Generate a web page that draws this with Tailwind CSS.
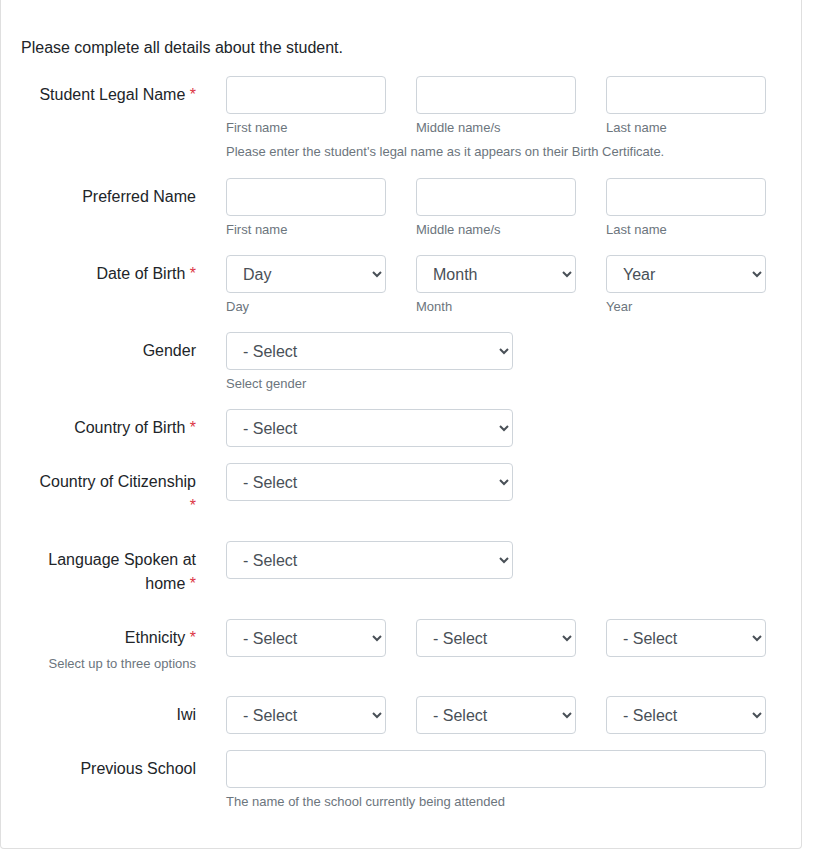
<!DOCTYPE html>
<html lang="en">
<head>
<meta charset="utf-8">
<meta name="viewport" content="width=device-width, initial-scale=1">
<title>Student details</title>
<script src="https://cdn.jsdelivr.net/npm/@tailwindcss/browser@4"></script>
</head>
<body class="bg-white font-['Liberation_Sans',Arial,sans-serif] text-base text-[#212529]">
<form class="mr-[22px] rounded-b border border-t-0 border-[#dfdfdf] bg-white px-5 pt-9 pb-[37px]">
  <p class="mb-4">Please complete all details about the student.</p>

  <div class="flex flex-col gap-4 px-[15px]">
    <div class="grid grid-cols-12 gap-x-[30px]" role="group" aria-labelledby="legal">
      <div id="legal" class="col-span-3 py-[7px] text-right">Student Legal Name <span class="text-[#dc3545]">*</span></div>
      <div class="col-span-3">
        <input id="legal-first" type="text" class="block h-[38px] w-full rounded border border-[#ced4da] bg-white px-3 text-[#495057]">
        <label for="legal-first" class="mt-1 block text-[13px] leading-[19px] text-[#6c757d]">First name</label>
      </div>
      <div class="col-span-3">
        <input id="legal-middle" type="text" class="block h-[38px] w-full rounded border border-[#ced4da] bg-white px-3 text-[#495057]">
        <label for="legal-middle" class="mt-1 block text-[13px] leading-[19px] text-[#6c757d]">Middle name/s</label>
      </div>
      <div class="col-span-3">
        <input id="legal-last" type="text" class="block h-[38px] w-full rounded border border-[#ced4da] bg-white px-3 text-[#495057]">
        <label for="legal-last" class="mt-1 block text-[13px] leading-[19px] text-[#6c757d]">Last name</label>
      </div>
      <small class="col-span-9 col-start-4 mt-[5px] text-[13px] leading-5 text-[#6c757d]">Please enter the student's legal name as it appears on their Birth Certificate.</small>
    </div>

    <div class="grid grid-cols-12 gap-x-[30px]" role="group" aria-labelledby="preferred">
      <div id="preferred" class="col-span-3 py-[7px] text-right">Preferred Name</div>
      <div class="col-span-3">
        <input id="pref-first" type="text" class="block h-[38px] w-full rounded border border-[#ced4da] bg-white px-3 text-[#495057]">
        <label for="pref-first" class="mt-1 block text-[13px] leading-[19px] text-[#6c757d]">First name</label>
      </div>
      <div class="col-span-3">
        <input id="pref-middle" type="text" class="block h-[38px] w-full rounded border border-[#ced4da] bg-white px-3 text-[#495057]">
        <label for="pref-middle" class="mt-1 block text-[13px] leading-[19px] text-[#6c757d]">Middle name/s</label>
      </div>
      <div class="col-span-3">
        <input id="pref-last" type="text" class="block h-[38px] w-full rounded border border-[#ced4da] bg-white px-3 text-[#495057]">
        <label for="pref-last" class="mt-1 block text-[13px] leading-[19px] text-[#6c757d]">Last name</label>
      </div>
    </div>

    <div class="grid grid-cols-12 gap-x-[30px]" role="group" aria-labelledby="dob">
      <div id="dob" class="col-span-3 py-[7px] text-right">Date of Birth <span class="text-[#dc3545]">*</span></div>
      <div class="col-span-3">
        <select id="dob-day" class="block h-[38px] w-full rounded border border-[#ced4da] bg-white px-3 text-[#495057]"><option>Day</option></select>
        <label for="dob-day" class="mt-1 block text-[13px] leading-[19px] text-[#6c757d]">Day</label>
      </div>
      <div class="col-span-3">
        <select id="dob-month" class="block h-[38px] w-full rounded border border-[#ced4da] bg-white px-3 text-[#495057]"><option>Month</option></select>
        <label for="dob-month" class="mt-1 block text-[13px] leading-[19px] text-[#6c757d]">Month</label>
      </div>
      <div class="col-span-3">
        <select id="dob-year" class="block h-[38px] w-full rounded border border-[#ced4da] bg-white px-3 text-[#495057]"><option>Year</option></select>
        <label for="dob-year" class="mt-1 block text-[13px] leading-[19px] text-[#6c757d]">Year</label>
      </div>
    </div>

    <div class="grid grid-cols-12 gap-x-[30px]">
      <label for="gender" class="col-span-3 py-[7px] text-right">Gender</label>
      <div class="col-span-5">
        <select id="gender" aria-describedby="gender-help" class="block h-[38px] w-full rounded border border-[#ced4da] bg-white px-3 text-[#495057]"><option>- Select</option></select>
        <small id="gender-help" class="mt-1 block text-[13px] leading-[19px] text-[#6c757d]">Select gender</small>
      </div>
    </div>

    <div class="grid grid-cols-12 gap-x-[30px]">
      <label for="birth-country" class="col-span-3 py-[7px] text-right">Country of Birth <span class="text-[#dc3545]">*</span></label>
      <div class="col-span-5">
        <select id="birth-country" class="block h-[38px] w-full rounded border border-[#ced4da] bg-white px-3 text-[#495057]"><option>- Select</option></select>
      </div>
    </div>

    <div class="grid grid-cols-12 gap-x-[30px]">
      <label for="citizenship" class="col-span-3 py-[7px] text-right">Country of Citizenship <span class="text-[#dc3545]">*</span></label>
      <div class="col-span-5">
        <select id="citizenship" class="block h-[38px] w-full rounded border border-[#ced4da] bg-white px-3 text-[#495057]"><option>- Select</option></select>
      </div>
    </div>

    <div class="grid grid-cols-12 gap-x-[30px]">
      <label for="language" class="col-span-3 py-[7px] text-right">Language Spoken at home <span class="text-[#dc3545]">*</span></label>
      <div class="col-span-5">
        <select id="language" class="block h-[38px] w-full rounded border border-[#ced4da] bg-white px-3 text-[#495057]"><option>- Select</option></select>
      </div>
    </div>

    <div class="grid grid-cols-12 gap-x-[30px]" role="group" aria-labelledby="ethnicity">
      <div class="col-span-3 py-[7px] text-right">
        <div id="ethnicity">Ethnicity <span class="text-[#dc3545]">*</span></div>
        <small class="mt-1 block text-[13px] leading-[19px] text-[#6c757d]">Select up to three options</small>
      </div>
      <div class="col-span-3">
        <select aria-label="Ethnicity 1" class="block h-[38px] w-full rounded border border-[#ced4da] bg-white px-3 text-[#495057]"><option>- Select</option></select>
      </div>
      <div class="col-span-3">
        <select aria-label="Ethnicity 2" class="block h-[38px] w-full rounded border border-[#ced4da] bg-white px-3 text-[#495057]"><option>- Select</option></select>
      </div>
      <div class="col-span-3">
        <select aria-label="Ethnicity 3" class="block h-[38px] w-full rounded border border-[#ced4da] bg-white px-3 text-[#495057]"><option>- Select</option></select>
      </div>
    </div>

    <div class="grid grid-cols-12 gap-x-[30px]" role="group" aria-labelledby="iwi">
      <div id="iwi" class="col-span-3 py-[7px] text-right">Iwi</div>
      <div class="col-span-3">
        <select aria-label="Iwi 1" class="block h-[38px] w-full rounded border border-[#ced4da] bg-white px-3 text-[#495057]"><option>- Select</option></select>
      </div>
      <div class="col-span-3">
        <select aria-label="Iwi 2" class="block h-[38px] w-full rounded border border-[#ced4da] bg-white px-3 text-[#495057]"><option>- Select</option></select>
      </div>
      <div class="col-span-3">
        <select aria-label="Iwi 3" class="block h-[38px] w-full rounded border border-[#ced4da] bg-white px-3 text-[#495057]"><option>- Select</option></select>
      </div>
    </div>

    <div class="grid grid-cols-12 gap-x-[30px]">
      <label for="school" class="col-span-3 py-[7px] text-right">Previous School</label>
      <div class="col-span-9">
        <input id="school" type="text" aria-describedby="school-help" class="block h-[38px] w-full rounded border border-[#ced4da] bg-white px-3 text-[#495057]">
        <small id="school-help" class="mt-1 block text-[13px] leading-[19px] text-[#6c757d]">The name of the school currently being attended</small>
      </div>
    </div>
  </div>
</form>
</body>
</html>
